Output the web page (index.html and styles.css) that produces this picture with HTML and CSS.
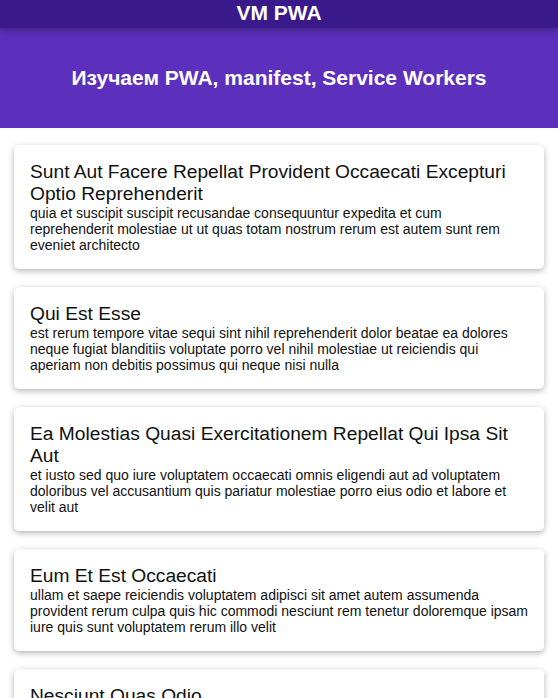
FILE: index.html
```html
<!DOCTYPE html>
<html lang="ru">
<head>
<meta charset="utf-8">
<title>VM PWA</title>
<link rel="stylesheet" href="styles.css">
</head>
<body>
<header class="topbar">VM PWA</header>
<section class="hero"><h1 class="hero-title">Изучаем PWA, manifest, Service Workers</h1></section>
<main class="posts">
  <article class="card">
    <h2 class="card-title">Sunt Aut Facere Repellat Provident Occaecati Excepturi Optio Reprehenderit</h2>
    <p class="card-body">quia et suscipit suscipit recusandae consequuntur expedita et cum reprehenderit molestiae ut ut quas totam nostrum rerum est autem sunt rem eveniet architecto</p>
  </article>
  <article class="card">
    <h2 class="card-title">Qui Est Esse</h2>
    <p class="card-body">est rerum tempore vitae sequi sint nihil reprehenderit dolor beatae ea dolores neque fugiat blanditiis voluptate porro vel nihil molestiae ut reiciendis qui aperiam non debitis possimus qui neque nisi nulla</p>
  </article>
  <article class="card">
    <h2 class="card-title">Ea Molestias Quasi Exercitationem Repellat Qui Ipsa Sit Aut</h2>
    <p class="card-body">et iusto sed quo iure voluptatem occaecati omnis eligendi aut ad voluptatem doloribus vel accusantium quis pariatur molestiae porro eius odio et labore et velit aut</p>
  </article>
  <article class="card">
    <h2 class="card-title">Eum Et Est Occaecati</h2>
    <p class="card-body">ullam et saepe reiciendis voluptatem adipisci sit amet autem assumenda provident rerum culpa quis hic commodi nesciunt rem tenetur doloremque ipsam iure quis sunt voluptatem rerum illo velit</p>
  </article>
  <article class="card">
    <h2 class="card-title">Nesciunt Quas Odio</h2>
    <p class="card-body">repudiandae veniam quaerat sunt sed alias aut fugiat sit autem sed est voluptatem omnis possimus esse voluptatibus quis est aut tenetur dolor neque</p>
  </article>
</main>
</body>
</html>
```
FILE: styles.css
```css
* { box-sizing: border-box; }
html, body { margin: 0; padding: 0; }
body {
  font-family: "Liberation Sans", Arial, sans-serif;
  background: #ffffff;
  color: #111111;
}
.topbar {
  position: relative;
  z-index: 2;
  height: 28px;
  line-height: 26px;
  text-align: center;
  background: #3a1a8a;
  color: #ffffff;
  font-weight: bold;
  font-size: 21px;
  box-shadow: 0 2px 8px rgba(0, 0, 0, 0.35);
}
.hero {
  height: 100px;
  background: #5c30bd;
  display: flex;
  align-items: center;
  justify-content: center;
}
.hero-title {
  margin: 0;
  color: #ffffff;
  font-size: 21px;
  font-weight: bold;
}
.posts {
  display: flex;
  flex-direction: column;
  gap: 18px;
  padding: 17px 14px 18px;
}
.card {
  background: #ffffff;
  border-radius: 5px;
  padding: 16px;
  box-shadow: 0 2px 6px rgba(0, 0, 0, 0.3);
}
.card-title {
  margin: 0;
  font-size: 19.2px;
  font-weight: normal;
  line-height: 22px;
  color: #111111;
}
.card-body {
  margin: 0;
  font-size: 14px;
  line-height: 16px;
  color: #111111;
}
```
